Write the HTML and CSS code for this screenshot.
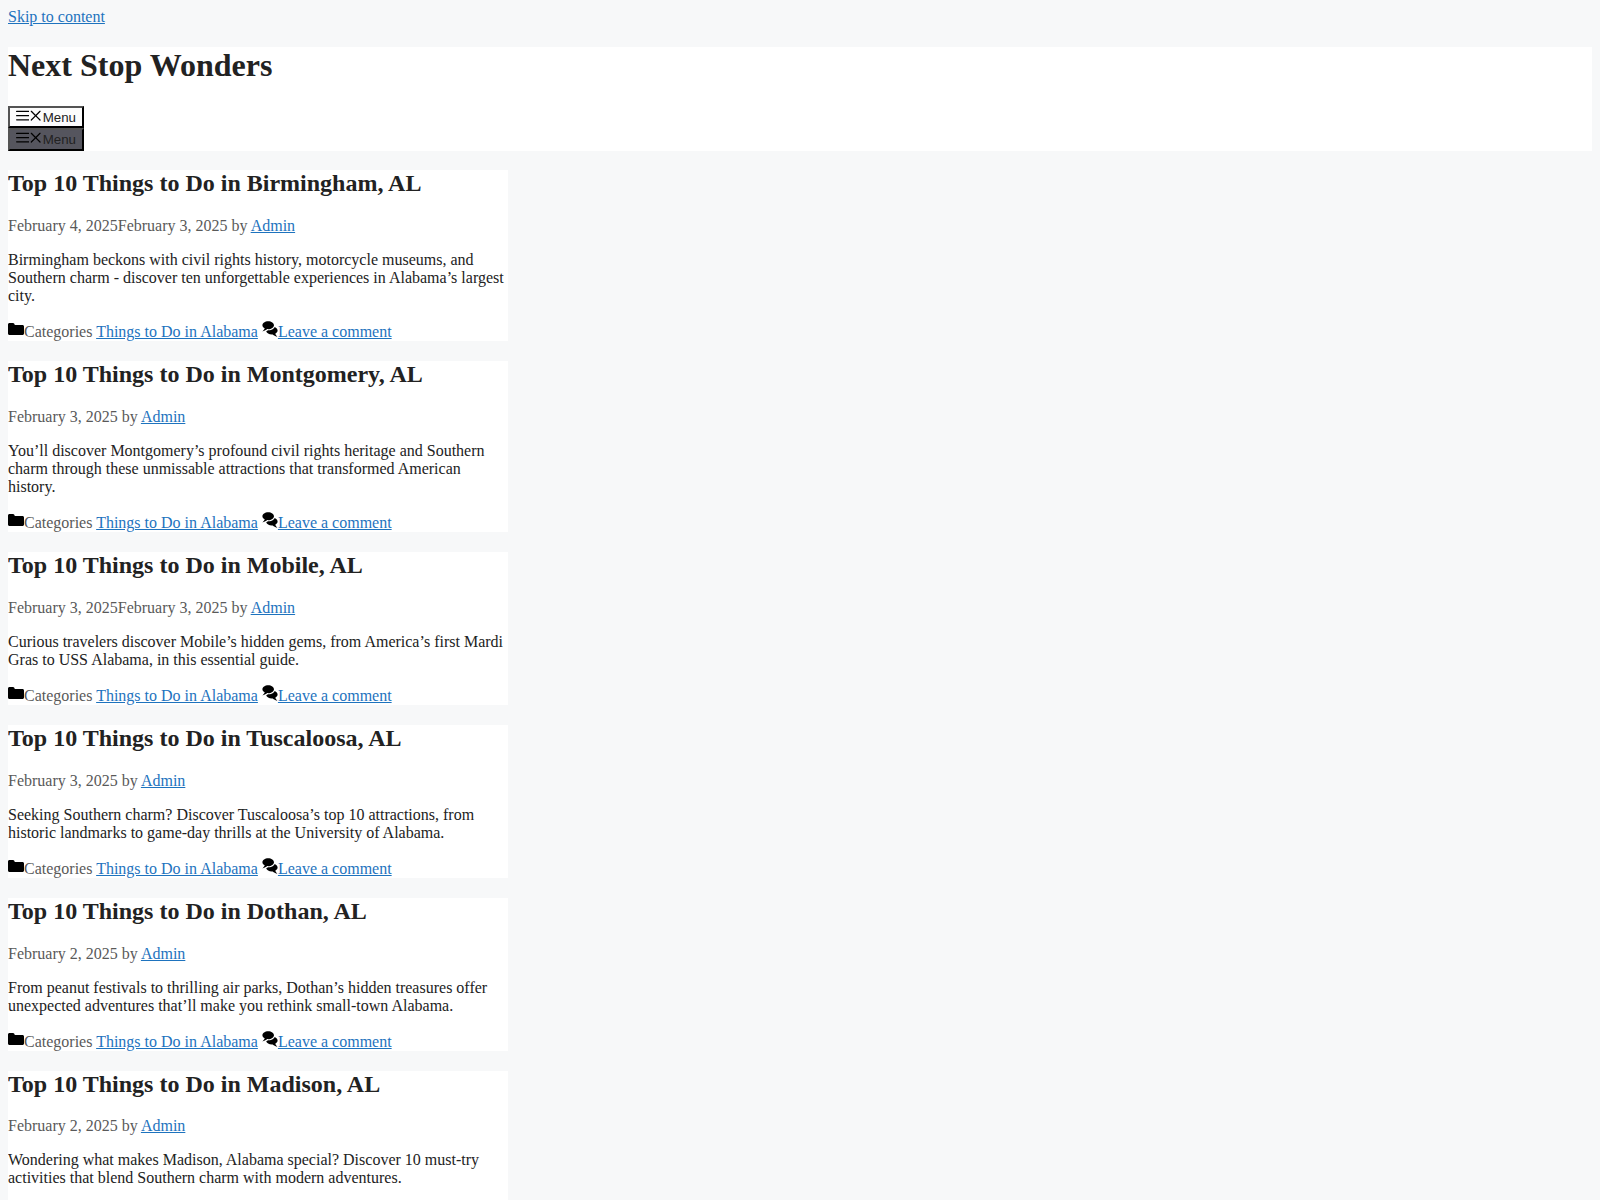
FILE: index.html
```html
<!DOCTYPE html>
<html lang="en-US">
<head>
    <meta charset="UTF-8">
    <meta name="viewport" content="width=device-width, initial-scale=1">
    <title>Next Stop Wonders</title>
    <link rel="stylesheet" href="styles.css">
</head>
<body>

<!-- Shared icons -->
<svg class="icon-sprite" aria-hidden="true">
    <symbol id="icon-bars" viewBox="0 0 512 512"><path d="M0 96c0-13.255 10.745-24 24-24h464c13.255 0 24 10.745 24 24s-10.745 24-24 24H24c-13.255 0-24-10.745-24-24zm0 160c0-13.255 10.745-24 24-24h464c13.255 0 24 10.745 24 24s-10.745 24-24 24H24c-13.255 0-24-10.745-24-24zm0 160c0-13.255 10.745-24 24-24h464c13.255 0 24 10.745 24 24s-10.745 24-24 24H24c-13.255 0-24-10.745-24-24z"/></symbol>
    <symbol id="icon-close" viewBox="0 0 512 512"><path d="M71.029 71.029c9.373-9.372 24.569-9.372 33.942 0L256 222.059l151.029-151.03c9.373-9.372 24.569-9.372 33.942 0 9.372 9.373 9.372 24.569 0 33.942L289.941 256l151.03 151.029c9.372 9.373 9.372 24.569 0 33.942-9.373 9.372-24.569 9.372-33.942 0L256 289.941l-151.029 151.03c-9.373 9.372-24.569 9.372-33.942 0-9.372-9.373-9.372-24.569 0-33.942L222.059 256 71.029 104.971c-9.372-9.373-9.372-24.569 0-33.942z"/></symbol>
    <symbol id="icon-folder" viewBox="0 0 512 512"><path d="M0 112c0-26.51 21.49-48 48-48h110.014a48 48 0 0143.592 27.907l12.349 26.791A16 16 0 00228.486 128H464c26.51 0 48 21.49 48 48v224c0 26.51-21.49 48-48 48H48c-26.51 0-48-21.49-48-48V112z"/></symbol>
    <symbol id="icon-comments" viewBox="0 0 512 512"><path d="M132.838 329.973a435.298 435.298 0 0016.769-9.004c13.363-7.574 26.587-16.142 37.419-25.507 7.544.597 15.27.925 23.098.925 54.905 0 105.634-15.311 143.285-41.28 23.728-16.365 43.115-37.692 54.155-62.645 54.699 22.205 91.498 63.272 91.498 110.286 0 42.186-29.558 79.498-75.09 102.828 23.46 49.216 75.09 101.709 75.09 101.709s-115.837-38.35-154.424-78.46c-9.956 1.12-20.297 1.758-30.793 1.758-88.727 0-162.927-43.071-181.007-100.61z"/><path d="M383.371 132.502c0 70.603-82.961 127.787-185.216 127.787-10.496 0-20.837-.639-30.793-1.757-38.587 40.093-154.424 78.42-154.424 78.42s51.63-52.472 75.09-101.67c-45.532-23.321-75.09-60.619-75.09-102.79C12.938 61.9 95.9 4.716 198.155 4.716 300.41 4.715 383.37 61.9 383.37 132.502z"/></symbol>
</svg>

<a class="skip-link" href="#content">Skip to content</a>

<header class="site-header">
    <h1 class="main-title">Next Stop Wonders</h1>
    <nav class="mobile-nav">
        <button class="menu-toggle"><svg class="icon"><use href="#icon-bars"/></svg><svg class="icon"><use href="#icon-close"/></svg>Menu</button>
    </nav>
    <nav class="main-navigation">
        <button class="menu-toggle menu-toggle-dark"><svg class="icon"><use href="#icon-bars"/></svg><svg class="icon"><use href="#icon-close"/></svg>Menu</button>
    </nav>
</header>

<main id="content">
    <article class="post">
        <h2 class="entry-title">Top 10 Things to Do in Birmingham, AL</h2>
        <div class="entry-meta"><time>February 4, 2025</time><time>February 3, 2025</time> by <a href="#">Admin</a></div>
        <p class="entry-summary">Birmingham beckons with civil rights history, motorcycle museums, and Southern charm - discover ten unforgettable experiences in Alabama’s largest city.</p>
        <footer class="entry-meta">
            <svg class="icon"><use href="#icon-folder"/></svg>Categories <a href="#">Things to Do in Alabama</a>
            <svg class="icon"><use href="#icon-comments"/></svg><a href="#">Leave a comment</a>
        </footer>
    </article>

    <article class="post">
        <h2 class="entry-title">Top 10 Things to Do in Montgomery, AL</h2>
        <div class="entry-meta"><time>February 3, 2025</time> by <a href="#">Admin</a></div>
        <p class="entry-summary">You’ll discover Montgomery’s profound civil rights heritage and Southern charm through these unmissable attractions that transformed American history.</p>
        <footer class="entry-meta">
            <svg class="icon"><use href="#icon-folder"/></svg>Categories <a href="#">Things to Do in Alabama</a>
            <svg class="icon"><use href="#icon-comments"/></svg><a href="#">Leave a comment</a>
        </footer>
    </article>

    <article class="post">
        <h2 class="entry-title">Top 10 Things to Do in Mobile, AL</h2>
        <div class="entry-meta"><time>February 3, 2025</time><time>February 3, 2025</time> by <a href="#">Admin</a></div>
        <p class="entry-summary">Curious travelers discover Mobile’s hidden gems, from America’s first Mardi Gras to USS Alabama, in this essential guide.</p>
        <footer class="entry-meta">
            <svg class="icon"><use href="#icon-folder"/></svg>Categories <a href="#">Things to Do in Alabama</a>
            <svg class="icon"><use href="#icon-comments"/></svg><a href="#">Leave a comment</a>
        </footer>
    </article>

    <article class="post">
        <h2 class="entry-title">Top 10 Things to Do in Tuscaloosa, AL</h2>
        <div class="entry-meta"><time>February 3, 2025</time> by <a href="#">Admin</a></div>
        <p class="entry-summary">Seeking Southern charm? Discover Tuscaloosa’s top 10 attractions, from historic landmarks to game-day thrills at the University of Alabama.</p>
        <footer class="entry-meta">
            <svg class="icon"><use href="#icon-folder"/></svg>Categories <a href="#">Things to Do in Alabama</a>
            <svg class="icon"><use href="#icon-comments"/></svg><a href="#">Leave a comment</a>
        </footer>
    </article>

    <article class="post">
        <h2 class="entry-title">Top 10 Things to Do in Dothan, AL</h2>
        <div class="entry-meta"><time>February 2, 2025</time> by <a href="#">Admin</a></div>
        <p class="entry-summary">From peanut festivals to thrilling air parks, Dothan’s hidden treasures offer unexpected adventures that’ll make you rethink small-town Alabama.</p>
        <footer class="entry-meta">
            <svg class="icon"><use href="#icon-folder"/></svg>Categories <a href="#">Things to Do in Alabama</a>
            <svg class="icon"><use href="#icon-comments"/></svg><a href="#">Leave a comment</a>
        </footer>
    </article>

    <article class="post">
        <h2 class="entry-title">Top 10 Things to Do in Madison, AL</h2>
        <div class="entry-meta"><time>February 2, 2025</time> by <a href="#">Admin</a></div>
        <p class="entry-summary">Wondering what makes Madison, Alabama special? Discover 10 must-try activities that blend Southern charm with modern adventures.</p>
        <footer class="entry-meta">
            <svg class="icon"><use href="#icon-folder"/></svg>Categories <a href="#">Things to Do in Alabama</a>
            <svg class="icon"><use href="#icon-comments"/></svg><a href="#">Leave a comment</a>
        </footer>
    </article>
</main>

</body>
</html>
```
FILE: styles.css
```css
body {
    margin: 8px;
    background-color: #f7f8f9;
    color: #222222;
    font-family: "Liberation Serif", "Times New Roman", serif;
    font-size: 16px;
}

a {
    color: #1e73be;
}

.icon-sprite {
    display: none;
}

.icon {
    width: 1em;
    height: 1em;
}

/* Header */
.site-header {
    background-color: #ffffff;
}

.main-title {
    margin: 0.67em 0;
    font-size: 32px;
}

.menu-toggle {
    display: block;
    border: 2px outset #000000;
    background-color: #fcfcfc;
    color: #222222;
    font-family: "Liberation Sans", Arial, sans-serif;
}

.menu-toggle-dark {
    background-color: #55555e;
}

/* Posts */
.post {
    max-width: 500px;
    background-color: #ffffff;
}

.entry-title {
    margin: 0.83em 0;
    font-size: 24px;
}

.entry-meta {
    color: #595959;
}

.entry-summary {
    margin: 1em 0;
}
```
